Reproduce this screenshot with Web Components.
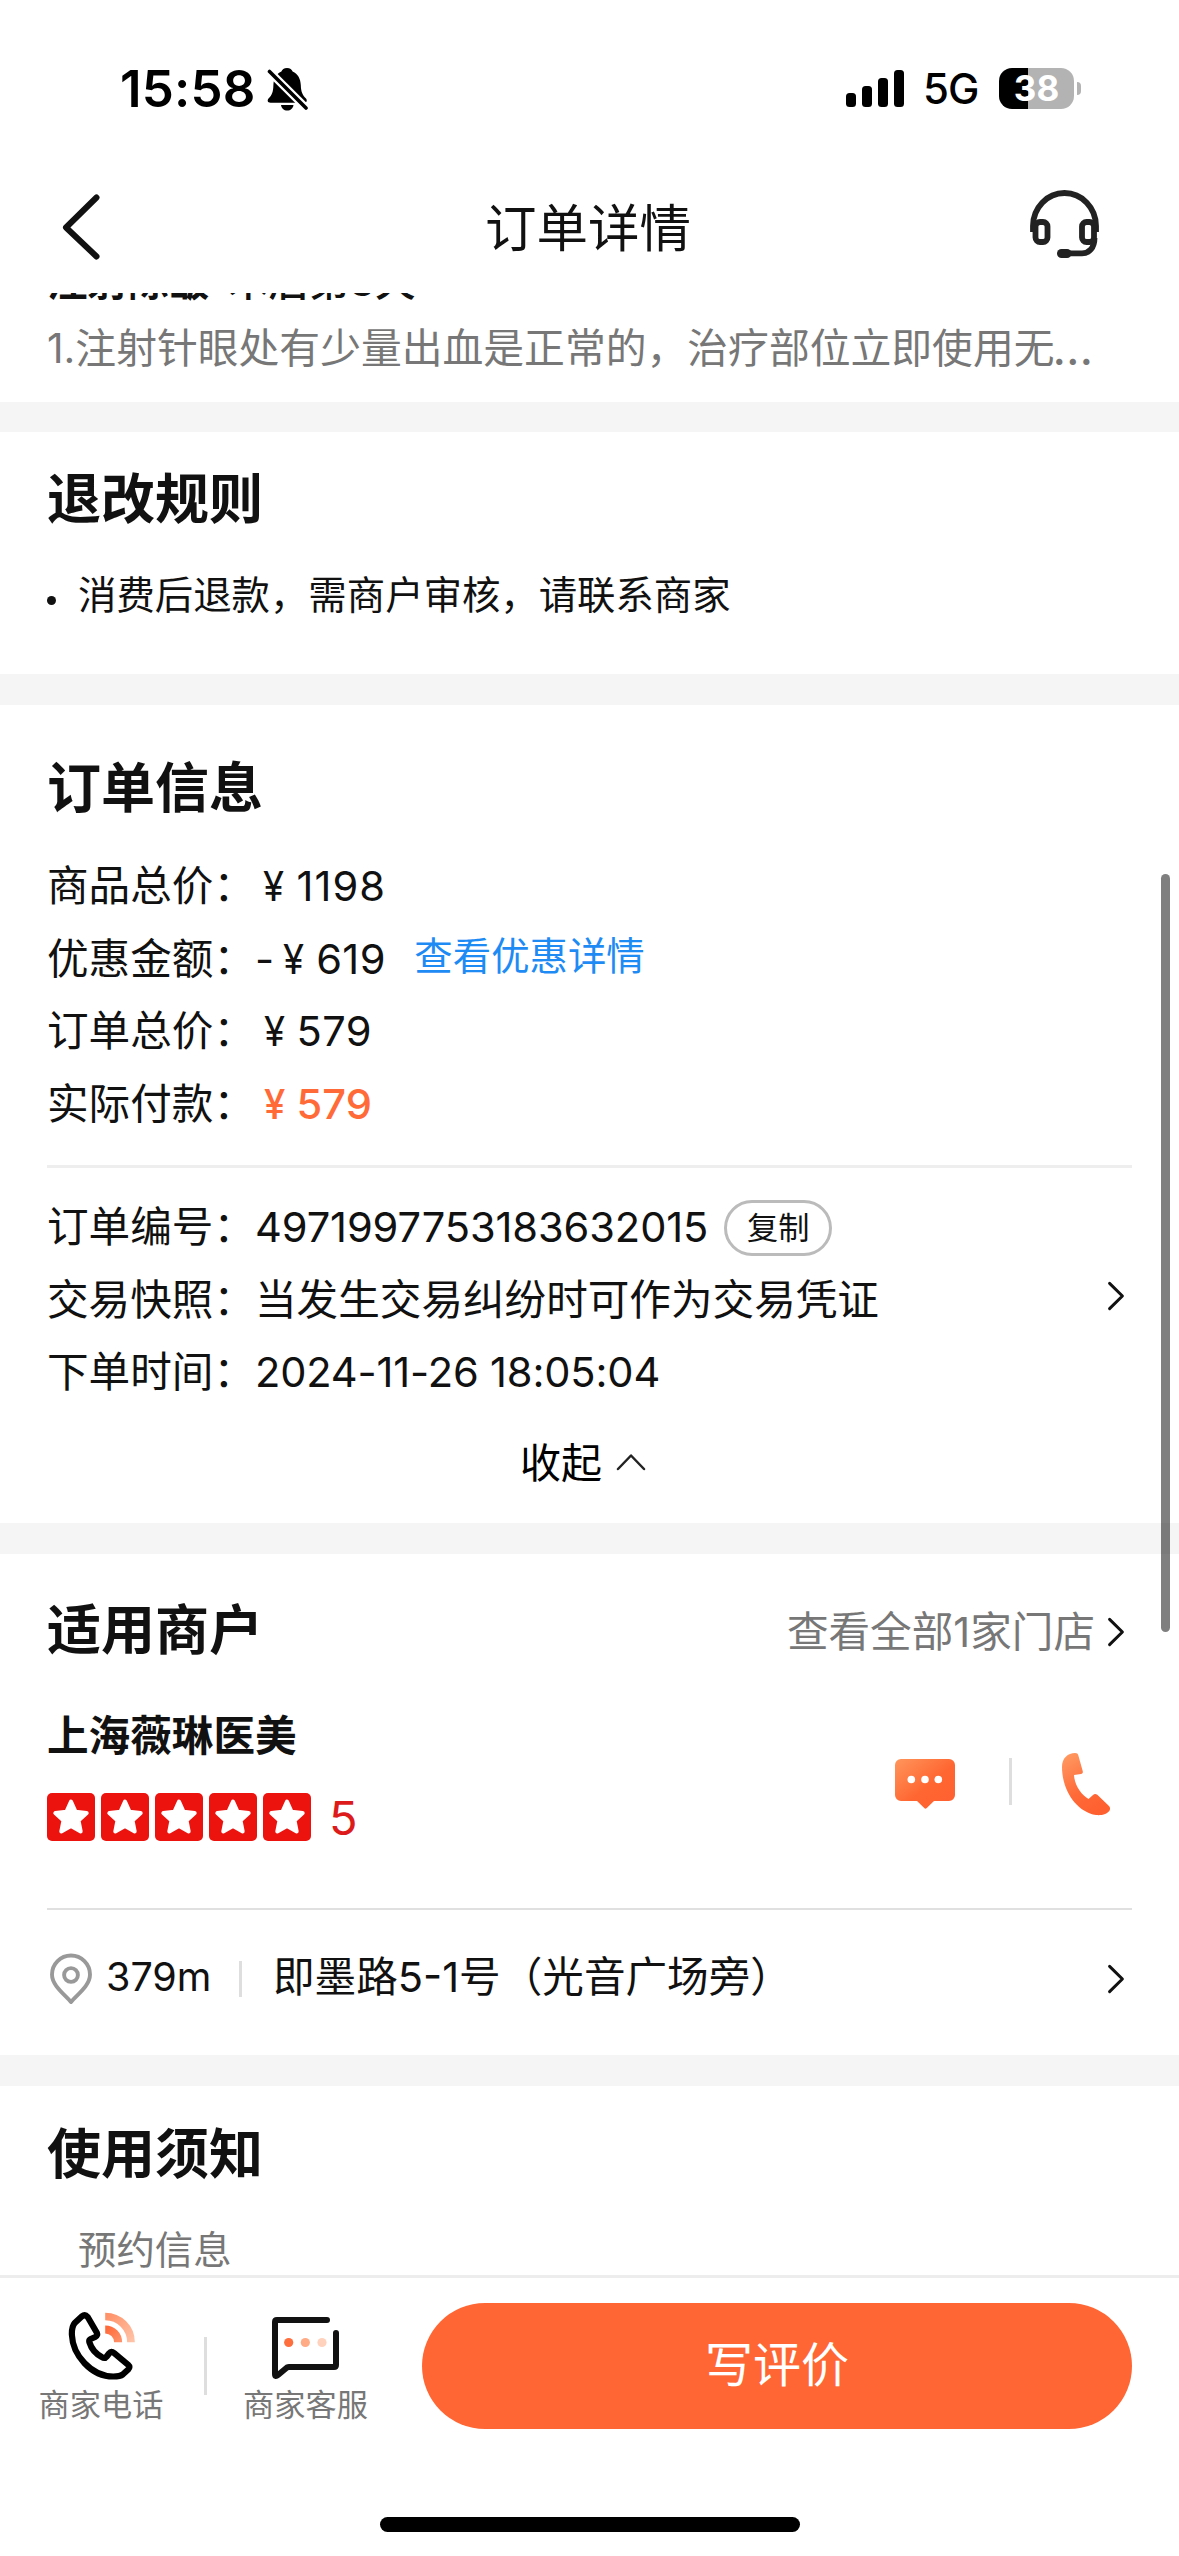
<!DOCTYPE html>
<html lang="zh-CN">
<head>
<meta charset="utf-8">
<title>订单详情</title>
<style>
  html, body { margin: 0; padding: 0; }
  body {
    width: 1179px; height: 2556px; overflow: hidden; background: #fff; color: #111;
    font-family: Inter, "Noto Sans CJK SC", sans-serif; font-size: 41.6px;
  }
</style>
</head>
<body>
<order-page></order-page>

<script>
const define = (name, html) => {
  const tpl = document.createElement('template');
  tpl.innerHTML = html;
  customElements.define(name, class extends HTMLElement {
    constructor() {
      super();
      this.attachShadow({ mode: 'open' }).appendChild(tpl.content.cloneNode(true));
    }
  });
};

/* ---------- small parts ---------- */

define('chevron-right', `
  <style>:host{display:block;width:18px;height:32px;flex:none} svg{display:block}</style>
  <svg width="18" height="32" viewBox="0 0 18 32"><path d="M2.6 3.4L15.4 16L2.6 28.6" fill="none" stroke="#111" stroke-width="3" stroke-linecap="round" stroke-linejoin="round"/></svg>`);

define('thin-rule', `
  <style>:host{display:block;height:var(--rule-h,3px);background:var(--rule-c,#eee)}</style>`);

define('v-rule', `
  <style>:host{display:block;flex:none;width:3px;height:var(--len,47px);background:#dedede}</style>`);

define('yuan-sign', `
  <style>:host{display:inline-block;width:1em;text-align:center}span{display:inline-block;margin-right:3px;transform:scaleX(.92)}</style><span>¥</span>`);

define('copy-button', `
  <style>:host{display:flex;align-items:center;justify-content:center;box-sizing:border-box;width:108px;height:56px;
    border:3px solid #bbb;border-radius:28px;font-size:31.2px;line-height:50px;flex:none}</style><slot></slot>`);

define('info-row', `
  <style>
    :host{display:flex;align-items:center;height:var(--row,72.6px);line-height:60px;white-space:nowrap}
    .l{width:208px;flex:none}
    .v{display:flex;align-items:center;flex:1}
  </style>
  <span class="l"><slot name="label"></slot></span><span class="v"><slot></slot></span>`);

define('page-section', `
  <style>
    :host{display:block;box-sizing:border-box;padding-left:47px;padding-right:47px;flex:none;background:#fff;border-top:var(--band,31px) solid #f5f5f5}
    header{display:flex;align-items:center;justify-content:space-between;height:66px}
    h2{margin:3px 0 0;font-size:54px;font-weight:700;line-height:66px;white-space:nowrap}
  </style>
  <header><h2><slot name="title"></slot></h2><slot name="extra"></slot></header>
  <slot></slot>`);

/* ---------- status bar and navigation ---------- */

define('status-bar', `
  <style>
    :host{display:flex;align-items:center;box-sizing:border-box;height:162px;padding:15px 98px 0 120px;color:#000;line-height:60px}
    .time{font-size:51px;font-weight:600;letter-spacing:.2px;width:146px;white-space:nowrap}
    .sig{margin-left:auto;display:flex;align-items:flex-end;gap:6px;height:37px;margin-right:19px}
    .sig i{display:block;width:10px;border-radius:3.5px;background:#000}
    .net{font-size:42px;width:76px;font-weight:450;letter-spacing:-1px}
    .bat{width:75px;height:41px;border-radius:13px;background:linear-gradient(90deg,#000 29px,#b3b3b3 29px);color:#fff;
      font-size:35px;font-weight:700;line-height:41px;text-align:center;letter-spacing:0}
    .nub{width:4px;height:13px;border-radius:0 5px 5px 0;background:#b3b3b3;margin-left:3px;margin-right:0}
  </style>
  <span class="time">15:58</span>
  <svg width="42" height="46" viewBox="0 0 42 46">
    <path d="M21 2C24 2 26 3.5 26.6 5.6C32 8 34.5 13 34.8 19C35 26 36.5 29 40 32.5C41.5 34.5 40.8 36.7 38 36.7H4.5C1.5 36.7 1 34.5 2.5 32.5C6 29 7.2 26 7.4 19C7.7 13 10 8 15.4 5.6C16 3.5 18 2 21 2Z"/>
    <path d="M15 39h12.5C27 42.500 24.500 44.600 21.200 44.600S15.500 42.500 15 39Z"/>
    <path d="M1 3L42 44" stroke="#fff" stroke-width="8"/>
    <path d="M3.500 5.500L40 42" stroke="#000" stroke-width="3.600" stroke-linecap="round"/>
  </svg>
  <span class="sig"><i style="height:14px"></i><i style="height:21px"></i><i style="height:29px"></i><i style="height:37px"></i></span>
  <span class="net">5G</span>
  <span class="bat">38</span><span class="nub"></span>`);

define('nav-bar', `
  <style>
    :host{display:flex;align-items:center;justify-content:space-between;height:131px;padding:0 78px 0 61px}
    h1{margin:0;font-size:51.5px;font-weight:400;line-height:66px}
    .back{margin:-2px 30px 0 0}
    .head{margin-top:-7px}
    svg{display:block}
  </style>
  <svg class="back" width="57" height="66" viewBox="0 0 57 66" fill="none"><path d="M35.500 3.500L5 33.500L35.500 62.500" stroke="#111" stroke-width="6" stroke-linecap="round" stroke-linejoin="round"/></svg>
  <h1><slot></slot></h1>
  <svg class="head" width="73" height="72" viewBox="0 0 73 72" fill="none" stroke="#222" stroke-width="5.800">
    <path d="M5 44V38A31.500 33 0 0 1 68 38V44"/>
    <rect x="7.500" y="34" width="12" height="20" rx="4.500"/>
    <rect x="54" y="34" width="12" height="20" rx="4.500"/>
    <path d="M66.500 50C66.500 60 61 65.300 54 65.300H38"/>
    <rect x="29" y="61" width="14.500" height="9" rx="4.500" fill="#222" stroke="none"/>
  </svg>`);

/* ---------- merchant ---------- */

define('star-tile', `
  <style>:host{display:block;width:48px;height:48px;border-radius:5px;background:#ec130f} svg{display:block}</style>
  <svg width="48" height="48" viewBox="0 0 48 48"><path d="M24 8.500L28.600 18.700L39.700 20L31.500 27.500L33.700 38.500L24 33L14.300 38.500L16.500 27.500L8.300 20L19.400 18.700Z" fill="#fff" stroke="#fff" stroke-width="4" stroke-linejoin="round"/></svg>`);

define('merchant-card', `
  <style>
    :host{display:flex;justify-content:space-between;margin-top:49px}
    .name{font-weight:600;line-height:50px;height:50px;white-space:nowrap}
    .rate{display:flex;align-items:center;gap:6px;height:48px;margin-top:31.5px}
    .score{font-size:47px;line-height:50px;color:#dd1b1b;margin:2px 0 0 12px;font-weight:400}
    .acts{display:flex;align-items:center;padding:17px 20px 0 0}
    svg{display:block}
    v-rule{margin:-5px 50px 0 54px}
  </style>
  <div>
    <div class="name"><slot></slot></div>
    <div class="rate"><star-tile></star-tile><star-tile></star-tile><star-tile></star-tile><star-tile></star-tile><star-tile></star-tile><span class="score"><slot name="score"></slot></span></div>
  </div>
  <div class="acts">
    <svg width="60" height="50" viewBox="0 0 60 50">
      <defs><linearGradient id="m" x1="0" y1="0" x2="1" y2="1"><stop offset="0" stop-color="#ff965c"/><stop offset=".55" stop-color="#ff6631"/><stop offset="1" stop-color="#ff6030"/></linearGradient></defs>
      <path d="M6 0H54A6 6 0 0 1 60 6V36A6 6 0 0 1 54 42H39L31.500 49.300Q30.500 50 29.500 49.300L22 42H6A6 6 0 0 1 0 36V6A6 6 0 0 1 6 0Z" fill="url(#m)"/>
      <g fill="#fff"><circle cx="16.300" cy="20.500" r="3.800"/><circle cx="30" cy="20.500" r="3.800"/><circle cx="43.300" cy="20.500" r="3.800"/></g>
    </svg>
    <v-rule></v-rule>
    <svg width="50" height="63" viewBox="0 0 50 63">
      <defs><linearGradient id="p" x1=".1" y1="0" x2=".6" y2="1"><stop offset="0" stop-color="#ff9a62"/><stop offset=".6" stop-color="#ff6a38"/><stop offset="1" stop-color="#ff6030"/></linearGradient></defs>
      <path d="M0 14C0 5 6 0 13 0C15.500 0 16 1 16.500 3L20.700 18C21.200 20 20.500 20.700 19 21L12 22C12.500 32 19 41.500 26.500 46L31 42Q33 40 35.300 41.800L47 53Q49 55 47.300 58C44 62 38 62.500 34 62C15 59 0 38 0 14Z" fill="url(#p)"/>
    </svg>
  </div>`);

define('address-row', `
  <style>
    :host{display:flex;align-items:center;height:68px;line-height:60px;white-space:nowrap}
    .pin{display:block;margin:4px 13px 0 2px}
    .dist{font-size:39.5px;width:133px}
    .addr{flex:1;margin-left:31px}
    v-rule{--len:36px;margin-top:4px}
    chevron-right{margin:4px 7px 0 0}
  </style>
  <svg class="pin" width="44" height="52" viewBox="0 0 44 52" fill="none" stroke="#999" stroke-width="3.900"><path d="M22 49C16.500 42 3 33 3 21.500A19 19 0 0 1 41 21.500C41 33 27.500 42 22 49Z" stroke-linejoin="round"/><circle cx="22" cy="22" r="6.900"/></svg>
  <span class="dist"><slot name="distance"></slot></span><v-rule></v-rule>
  <span class="addr"><slot></slot></span><chevron-right></chevron-right>`);

/* ---------- bottom bar ---------- */

define('bar-action', `
  <style>
    :host{display:flex;flex-direction:column;align-items:center;width:125px;padding-top:7px;flex:none}
    .t{font-size:31.200px;line-height:40px;color:#777;margin-top:3px;white-space:nowrap}
  </style>
  <slot name="icon"></slot><span class="t"><slot></slot></span>`);

define('bottom-bar', `
  <style>
    :host{display:flex;align-items:flex-start;box-sizing:border-box;height:281px;border-top:3px solid #ededed;padding:25px 0 0 38.5px;background:#fff;flex:none}
    v-rule{--len:58px;margin:34px 36px 0 40.5px}
    .btn{width:710px;height:126px;border-radius:63px;background:#f63;color:#fff;font-size:48px;line-height:124px;text-align:center;margin-left:54px}
    svg{display:block}
  </style>
  <bar-action>
    <svg slot="icon" width="72" height="72" viewBox="0.800 0 72 72" fill="none">
      <defs>
        <linearGradient id="a" x1="0" y1="0" x2="1" y2="1"><stop offset="0" stop-color="#ff9167"/><stop offset="1" stop-color="#ffc2a6"/></linearGradient>
        <linearGradient id="b" x1="0" y1="0" x2="1" y2="1"><stop offset="0" stop-color="#ff6a3a"/><stop offset="1" stop-color="#ff8f66"/></linearGradient>
      </defs>
      <path d="M17.500 6.500L10.500 13C8 16 7.500 20 7.700 25C8.500 45 27 66.500 49 66.500C53 66.500 56 66.500 58.500 64.500L64 59.500Q66.500 57 64 54.800L50 43.200Q47 40.800 44.800 43.500L42.500 46.500Q40.500 49 37.500 47C32 44 27 38 25.300 32.500Q24.500 30 26.500 29L31 27Q34 25.500 32.500 22.500L23.500 7Q20.800 4 17.500 6.500Z" stroke="#000" stroke-width="6.200" stroke-linejoin="round"/>
      <path d="M41 6.500A25.800 25.800 0 0 1 66.800 32.300" stroke="url(#a)" stroke-width="7.700"/>
      <path d="M41 19.400A12.900 12.900 0 0 1 53.900 32.300" stroke="url(#b)" stroke-width="8"/>
    </svg>商家电话</bar-action>
  <v-rule></v-rule>
  <bar-action>
    <svg slot="icon" width="72" height="72" viewBox="0 0 72 72" fill="none">
      <path d="M57 10H7Q5 10 5 12V64Q5 67.500 8 65L17 57.500Q18 57 19 57H64Q66 57 66 55V23" stroke="#111" stroke-width="6" stroke-linecap="round" stroke-linejoin="round"/>
      <circle cx="18.700" cy="32.500" r="4.600" fill="#ff6e3d"/><circle cx="35.300" cy="32.500" r="4.600" fill="#ffab86"/><circle cx="52" cy="32.500" r="4.600" fill="#ffd2bd"/>
    </svg>商家客服</bar-action>
  <div class="btn">写评价</div>`);

/* ---------- page ---------- */

define('order-page', `
  <style>
    :host{display:flex;flex-direction:column;position:relative;width:1179px;height:2556px;background:#fff;overflow:hidden}
    main{flex:1;min-height:0;overflow:hidden;display:flex;flex-direction:column}
    .care{padding:0 47px;height:109px;flex:none;overflow:hidden;white-space:nowrap}
    .care p{margin:0;line-height:60px}
    .care .t{margin-top:-41px;font-weight:700;font-size:40.5px}
    .care .t span{margin-left:19px;font-weight:500}
    .care .d{display:flex;margin-top:6px;color:#777;font-size:40.8px}
    .care .d span{font-size:47px;margin-left:-2px}
    .s1{--band:30px;height:272px;padding-top:33px}
    .s2{height:849px;padding-top:49px}
    .s3{height:532px;padding-top:42px}
    .s4{height:260px;padding-top:34px}
    .li{display:flex;align-items:center;margin-top:34px;font-size:38.4px;line-height:60px}
    .li i{width:9px;height:9px;border-radius:50%;background:#111;margin:10px 22px 0 0}
    .rows{margin-top:30px;height:291.500px}
    .price{letter-spacing:.4px}
    .rule{margin-top:23.500px;margin-bottom:23px}
    .link{color:#1e8bf5;font-size:38.4px;margin:-5px 0 0 28.500px}
    .paid{color:#ff6a38;font-weight:500}
    .num{letter-spacing:-.1px}
    .date{letter-spacing:-.15px}
    .fold{display:flex;justify-content:center;align-items:center;gap:14px;margin-top:24px;height:60px;line-height:60px;padding-right:13px;font-size:41px;color:#000}
    copy-button{margin:1px 0 0 16px}
    .all{display:flex;align-items:center;gap:12px;padding-right:7px;color:#777}
    .all chevron-right{margin-top:5px}
    .note{margin:34px 0 0 31px;line-height:60px;font-size:38.4px;color:#777}
    .scroll{position:absolute;left:1161px;top:874px;width:9px;height:758px;border-radius:5px;background:rgba(0,0,0,.5)}
    .home{position:absolute;left:380px;top:2517px;width:420px;height:15px;border-radius:8px;background:#000}
  </style>
  <status-bar></status-bar>
  <nav-bar>订单详情</nav-bar>
  <main>
    <div class="care">
      <p class="t">注射除皱<span>术后第3天</span></p>
      <p class="d">1.注射针眼处有少量出血是正常的，治疗部位立即使用无<span>…</span></p>
    </div>

    <page-section class="s1">
      <span slot="title">退改规则</span>
      <div class="li"><i></i>消费后退款，需商户审核，请联系商家</div>
    </page-section>

    <page-section class="s2">
      <span slot="title">订单信息</span>
      <div class="rows">
        <info-row><span slot="label">商品总价：</span><span class="price" style="letter-spacing:1px"><yuan-sign></yuan-sign>1198</span></info-row>
        <info-row><span slot="label">优惠金额：</span><span class="price">-<yuan-sign></yuan-sign>619</span><span class="link">查看优惠详情</span></info-row>
        <info-row><span slot="label">订单总价：</span><span class="price"><yuan-sign></yuan-sign>579</span></info-row>
        <info-row><span slot="label">实际付款：</span><span class="paid"><yuan-sign></yuan-sign>579</span></info-row>
      </div>
      <thin-rule class="rule"></thin-rule>
      <div style="--row:72.5px">
        <info-row><span slot="label">订单编号：</span><span class="num">4971997753183632015</span><copy-button>复制</copy-button></info-row>
        <info-row><span slot="label">交易快照：</span><span style="flex:1">当发生交易纠纷时可作为交易凭证</span><chevron-right style="margin:-7px 7px 0 0"></chevron-right></info-row>
        <info-row><span slot="label">下单时间：</span><span class="date">2024-11-26 18:05:04</span></info-row>
      </div>
      <div class="fold">收起<svg width="30" height="18" viewBox="0 0 30 18"><path d="M2 15L15 1.500L28 15" fill="none" stroke="#222" stroke-width="2.500" stroke-linecap="round" stroke-linejoin="round"/></svg></div>
    </page-section>

    <page-section class="s3">
      <span slot="title">适用商户</span>
      <div slot="extra" class="all"><span>查看全部1家门店</span><chevron-right></chevron-right></div>
      <merchant-card>上海薇琳医美<span slot="score">5</span></merchant-card>
      <thin-rule style="--rule-h:2px;--rule-c:#e0e0e0;margin:67px 0 33px"></thin-rule>
      <address-row><span slot="distance">379m</span>即墨路5-1号（光音广场旁）</address-row>
    </page-section>

    <page-section class="s4">
      <span slot="title">使用须知</span>
      <div class="note">预约信息</div>
    </page-section>
  </main>
  <bottom-bar></bottom-bar>
  <div class="scroll"></div>
  <div class="home"></div>`);
</script>
</body>
</html>
